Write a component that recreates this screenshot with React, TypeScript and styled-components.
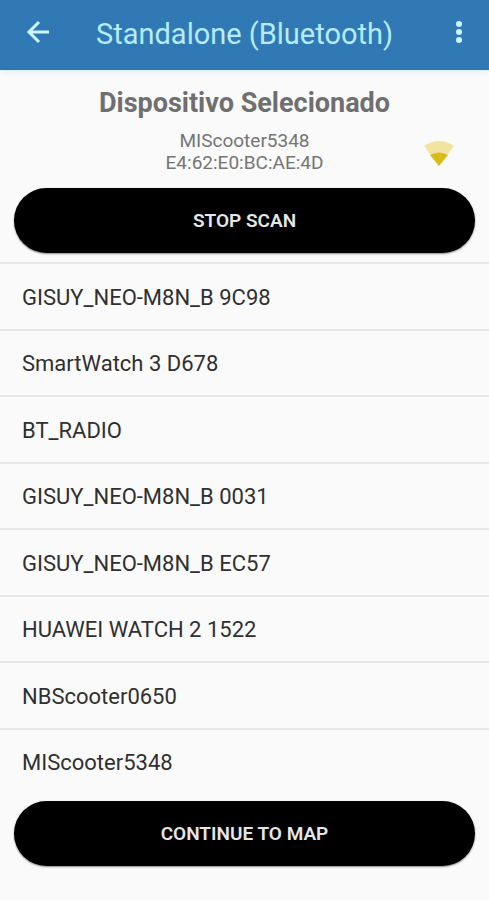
import React from 'react';
import styled, { createGlobalStyle } from 'styled-components';

const GlobalStyle = createGlobalStyle`
  *, *::before, *::after { box-sizing: border-box; }
  body { margin: 0; background: #fafafa; font-family: Roboto, "Liberation Sans", sans-serif; }
  button { font: inherit; border: 0; cursor: pointer; }
`;

const Screen = styled.div`
  display: flex;
  flex-direction: column;
  min-height: 100vh;
  padding-bottom: 34px;
  background: #fafafa;
`;

const AppBar = styled.header`
  display: grid;
  grid-template-columns: 76px 1fr 60px;
  align-items: start;
  height: 70px;
  background: #3179b4;
  border-bottom: 1px solid #3c6f9c;
  box-shadow: 0 1px 6px #d9ecfa;
`;

const Title = styled.h1`
  margin: 0;
  padding-left: 20px;
  color: #b5ecff;
  font-size: 29px;
  line-height: 68px;
  font-weight: 400;
  white-space: nowrap;
`;

const IconButton = styled.button`
  display: flex;
  align-items: center;
  justify-content: center;
  height: 64px;
  padding: 0;
  background: none;
  color: #c9f6ff;
`;

const Selected = styled.section`
  display: grid;
  grid-template-columns: 76px 1fr 76px;
  padding-top: 16px;
  text-align: center;
  color: #757575;
`;

const SelectedTitle = styled.h2`
  grid-column: 1 / -1;
  margin: 0 0 10px;
  color: #6f6f6f;
  font-size: 27px;
  line-height: 34px;
  font-weight: 700;
`;

const Device = styled.p`
  grid-column: 2;
  margin: 0;
  font-size: 19px;
  line-height: 22px;
`;

const Signal = styled.svg`
  align-self: end;
  justify-self: start;
  margin-left: 10px;
`;

const PillButton = styled.button<{ $spaceAbove: number }>`
  flex: none;
  height: 65px;
  margin: ${(p) => p.$spaceAbove}px 14px 0;
  border-radius: 33px;
  background: #000;
  color: #e6e6e6;
  box-shadow: 0 1px 2px rgba(0, 0, 0, 0.45);
  && {
    font-size: 19px;
    font-weight: 600;
  }
`;

const DeviceList = styled.ul`
  flex: 1;
  display: flex;
  flex-direction: column;
  margin: 9px 0 0;
  padding: 0;
  list-style: none;
`;

const DeviceRow = styled.li`
  flex: 1;
  display: flex;
  border-top: 2px solid #e8e8e8;
`;

const DeviceButton = styled.button`
  flex: 1;
  padding: 2px 22px 0;
  background: none;
  color: #303030;
  text-align: left;
  && { font-size: 22px; }
`;

const devices = [
  'GISUY_NEO-M8N_B 9C98',
  'SmartWatch 3 D678',
  'BT_RADIO',
  'GISUY_NEO-M8N_B 0031',
  'GISUY_NEO-M8N_B EC57',
  'HUAWEI WATCH 2 1522',
  'NBScooter0650',
  'MIScooter5348',
];

export default function App() {
  return (
    <>
      <GlobalStyle />
      <Screen>
        <AppBar>
          <IconButton aria-label="Back">
            <svg width="24" height="24" viewBox="0 0 24 24" fill="none" stroke="currentColor" strokeWidth="3">
              <path d="M23 12H3M13 2 3 12l10 10" />
            </svg>
          </IconButton>
          <Title>Standalone (Bluetooth)</Title>
          <IconButton aria-label="More options">
            <svg width="8" height="24" viewBox="0 0 8 24" fill="currentColor">
              <circle cx="4" cy="4" r="3" />
              <circle cx="4" cy="12" r="3" />
              <circle cx="4" cy="20" r="3" />
            </svg>
          </IconButton>
        </AppBar>
        <Selected>
          <SelectedTitle>Dispositivo Selecionado</SelectedTitle>
          <Device>
            MIScooter5348
            <br />
            E4:62:E0:BC:AE:4D
          </Device>
          <Signal width="32" height="34" viewBox="0 0 32 34" role="img" aria-label="Weak signal">
            <path d="M1 6Q16-4 31 6L16 26Z" fill="#f3e3a0" />
            <path d="M7 15Q16 10 25 15L16 26Z" fill="#d6bd1c" />
          </Signal>
        </Selected>
        <PillButton $spaceAbove={14}>STOP SCAN</PillButton>
        <DeviceList>
          {devices.map((name) => (
            <DeviceRow key={name}>
              <DeviceButton>{name}</DeviceButton>
            </DeviceRow>
          ))}
        </DeviceList>
        <PillButton $spaceAbove={7}>CONTINUE TO MAP</PillButton>
      </Screen>
    </>
  );
}
